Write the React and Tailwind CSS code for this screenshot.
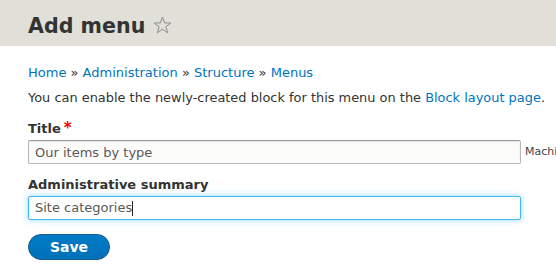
export default function App() {
  const font = { fontFamily: '"DejaVu Sans", "Liberation Sans", sans-serif' }

  return (
    <div className="w-[556px] h-[272px] overflow-hidden bg-white text-[#333]" style={font}>
      {/* Page title bar */}
      <div className="h-[46px] bg-[#e0e0d8] pl-[28px] pt-[14px] flex items-start">
        <h1 className="text-[20.6px] leading-[24px] font-bold text-[#333]">Add menu</h1>
        <svg className="ml-[8px] mt-[2px]" width="19" height="18" viewBox="0 0 19 18">
          <path
            d="M9.5 1 L11.6 6.9 L17.8 7 L12.9 10.8 L14.7 16.8 L9.5 13.2 L4.3 16.8 L6.1 10.8 L1.2 7 L7.4 6.9 Z"
            fill="none"
            stroke="#8c8c8c"
            strokeWidth="1"
            strokeLinejoin="round"
          />
        </svg>
      </div>

      <div className="px-[28px] whitespace-nowrap">
        {/* Breadcrumb */}
        <nav className="mt-[19px] text-[13px] leading-[15px] text-[#0074bd]">
          <a href="#">Home</a>
          <span className="text-[#333]"> » </span>
          <a href="#">Administration</a>
          <span className="text-[#333]"> » </span>
          <a href="#">Structure</a>
          <span className="text-[#333]"> » </span>
          <a href="#">Menus</a>
        </nav>

        <p className="mt-[10px] text-[12.93px] leading-[15px]">
          You can enable the newly-created block for this menu on the{' '}
          <a href="#" className="text-[#0074bd]">Block layout page</a>.
        </p>

        {/* Title */}
        <label className="block mt-[16px] text-[13px] leading-[15px] font-bold">
          Title<span className="ml-[3px] text-[#e00] text-[15px] font-bold">*</span>
        </label>
        <div className="mt-[4px] flex items-center">
          <input
            readOnly
            value="Our items by type"
            className="w-[493px] h-[24px] shrink-0 px-[6px] text-[13px] text-[#595959] bg-[#fcfcfa] border border-[#b8b8b8] border-t-[#999] rounded-[2px] shadow-[inset_0_1px_2px_rgba(0,0,0,0.1)] outline-none"
            style={font}
          />
          <span className="ml-[4px] text-[11px] text-[#444]">Machine name: our_items_by_type</span>
        </div>

        {/* Administrative summary */}
        <label className="block mt-[13px] text-[13px] leading-[15px] font-bold">Administrative summary</label>
        <div className="mt-[4px] w-[493px] h-[24px] px-[6px] flex items-center text-[13px] text-[#595959] bg-white border border-[#40b6ff] rounded-[2px] shadow-[0_0_6px_rgba(64,182,255,0.55)]">
          Site categories
          <span className="w-px h-[15px] bg-[#222]" />
        </div>

        <button className="mt-[14px] w-[82px] h-[26px] rounded-full bg-[#0071b8] bg-gradient-to-b from-[#007bc6] to-[#0071b8] border border-[#1e5c90] text-white text-[14px] font-bold leading-none">
          Save
        </button>
      </div>
    </div>
  )
}
